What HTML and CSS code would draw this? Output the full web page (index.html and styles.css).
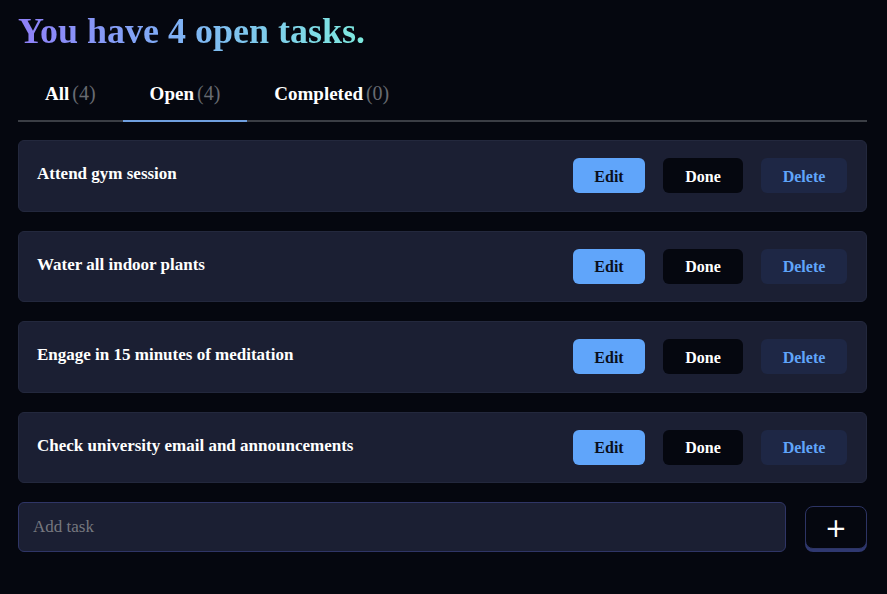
FILE: index.html
```html
<!DOCTYPE html>
<html lang="en">
<head>
<meta charset="utf-8">
<title>Tasks</title>
<link rel="stylesheet" href="styles.css">
</head>
<body>
<main class="app">
  <h1 class="title">You have 4 open tasks.</h1>
  <nav class="tabs">
    <button class="tab">All<span class="count">(4)</span></button>
    <button class="tab active">Open<span class="count">(4)</span></button>
    <button class="tab">Completed<span class="count">(0)</span></button>
  </nav>
  <ul class="list">
    <li class="card">
      <span class="task">Attend gym session</span>
      <div class="actions"><button class="btn edit">Edit</button><button class="btn done">Done</button><button class="btn delete">Delete</button></div>
    </li>
    <li class="card">
      <span class="task">Water all indoor plants</span>
      <div class="actions"><button class="btn edit">Edit</button><button class="btn done">Done</button><button class="btn delete">Delete</button></div>
    </li>
    <li class="card">
      <span class="task">Engage in 15 minutes of meditation</span>
      <div class="actions"><button class="btn edit">Edit</button><button class="btn done">Done</button><button class="btn delete">Delete</button></div>
    </li>
    <li class="card">
      <span class="task">Check university email and announcements</span>
      <div class="actions"><button class="btn edit">Edit</button><button class="btn done">Done</button><button class="btn delete">Delete</button></div>
    </li>
  </ul>
  <form class="add">
    <input class="add-input" type="text" placeholder="Add task">
    <button class="add-btn" type="button">+</button>
  </form>
</main>
</body>
</html>
```
FILE: styles.css
```css
* { box-sizing: border-box; }
html, body { margin: 0; padding: 0; background: #05070f; }
body {
  font-family: "Liberation Serif", "DejaVu Serif", serif;
  color: #fff;
}
.app {
  padding: 8px 20px 0 18px;
}
.title {
  margin: 0;
  font-size: 36px;
  line-height: 46px;
  font-weight: 700;
  display: inline-block;
  background: linear-gradient(90deg, #8f7ff8 0%, #7fb0f6 45%, #7eeadf 100%);
  -webkit-background-clip: text;
  background-clip: text;
  color: transparent;
}
.tabs {
  display: flex;
  margin-top: 21px;
  border-bottom: 2px solid #3b3e45;
}
.tab {
  background: none;
  border: none;
  font-family: inherit;
  font-size: 19px;
  font-weight: 700;
  color: #fff;
  padding: 8px 27px 16px 27px;
  margin-bottom: -2px;
  border-bottom: 2px solid transparent;
  line-height: 20px;
}
.tab.active { border-bottom-color: #6f9fdf; }
.count { color: #686b72; font-weight: 400; font-size: 20px; margin-left: 3px; }
.list {
  list-style: none;
  margin: 18px 0 0 0;
  padding: 0;
  display: flex;
  flex-direction: column;
  gap: 19px;
}
.card {
  display: flex;
  align-items: center;
  justify-content: space-between;
  height: 71.5px;
  padding: 0 19px 0 18px;
  background: #1b1f33;
  border: 1px solid #23283d;
  border-radius: 6px;
}
.task {
  font-size: 17px;
  font-weight: 700;
  margin-top: -3px;
}
.actions { display: flex; gap: 18px; }
.btn {
  height: 35px;
  border: none;
  border-radius: 6px;
  font-family: inherit;
  font-size: 16px;
  font-weight: 700;
  padding: 2px 0 0 0;
}
.edit { width: 72px; background: #60a5fa; color: #0a0f1c; }
.done { width: 80px; background: #05070f; color: #fff; }
.delete { width: 86px; background: #1e2745; color: #60a5fa; }
.add {
  display: flex;
  gap: 19px;
  margin-top: 19px;
  align-items: flex-start;
}
.add-input {
  flex: 1;
  height: 50px;
  background: #1b1f33;
  border: 1px solid #2f3566;
  border-radius: 6px;
  padding: 0 14px;
  font-family: inherit;
  font-size: 17px;
  color: #fff;
}
.add-input::placeholder { color: #76787f; }
.add-btn {
  width: 62px;
  height: 43px;
  margin-top: 4px;
  background: #05070f;
  border: 1px solid #2d3464;
  border-radius: 8px;
  box-shadow: 0 3px 0 #2f3870;
  color: #fff;
  font-family: "DejaVu Sans", sans-serif;
  font-size: 26px;
  line-height: 1;
  padding: 0;
}
```
